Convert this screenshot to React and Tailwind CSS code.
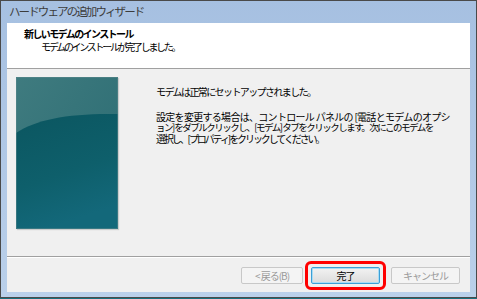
import React from "react";

const jp = { fontFamily: '"Noto Sans CJK JP", "Noto Sans", sans-serif' };

function Panel() {
  return (
    <svg width="102" height="152" viewBox="0 0 102 152" className="block">
      <defs>
        <linearGradient id="top" x1="0" y1="0" x2="1" y2="1">
          <stop offset="0" stopColor="#3f7b7f" />
          <stop offset="1" stopColor="#2a6b72" />
        </linearGradient>
        <linearGradient id="main" x1="0" y1="0" x2="0.3" y2="1">
          <stop offset="0" stopColor="#0b5660" />
          <stop offset="0.6" stopColor="#0e5f6b" />
          <stop offset="1" stopColor="#13687a" />
        </linearGradient>
      </defs>
      <rect x="0" y="0" width="102" height="152" fill="url(#top)" />
      <path d="M0 56 C 20 42, 55 36, 102 37 L102 152 L0 152 Z" fill="url(#main)" />
      <rect x="0.5" y="0.5" width="101" height="151" fill="none" stroke="#5d8a8e" strokeOpacity="0.5" />
    </svg>
  );
}

export default function App() {
  return (
    <div className="w-[477px] h-[299px] bg-[#18707e] overflow-hidden" style={jp}>
      <div className="w-[477px] h-[298px] flex flex-col border border-[#4a4a4a] bg-gradient-to-b from-[#a6c0e1] to-[#bad0ea]">
        <div className="h-[22px] flex items-center pl-[8px] text-[11.5px] tracking-[-1.9px] text-[#3c3c3c] leading-none whitespace-nowrap">
          ハードウェアの追加ウィザード
        </div>
        <div className="flex-1 flex flex-col mx-[6px] mb-[5px] bg-[#f0f0f0]">
          <div className="h-[46px] bg-white border-b border-[#a0a0a0] flex flex-col pt-[5px] pl-[17px] text-[10px] leading-[12px] text-black whitespace-nowrap">
            <div className="font-bold tracking-[-1.6px]">新しいモデムのインストール</div>
            <div className="pl-[17px] mt-[1px] tracking-[-2.3px]">モデムのインストールが完了しました。</div>
          </div>
          <div className="h-[188px] flex border-b border-[#a0a0a0] pt-[8px] pl-[9px]">
            <div className="shadow-[1px_1px_1px_rgba(0,0,0,0.15)] h-[152px]">
              <Panel />
            </div>
            <div className="pl-[38px] pt-[9px] text-[10px] leading-[11px] text-black whitespace-nowrap">
              <div className="tracking-[-1.6px]">モデムは正常にセットアップされました。</div>
              <div className="mt-[14px]">
                <div className="tracking-[-0.7px]">設定を変更する場合は、コントロール パネルの [電話とモデムのオプシ</div>
                <div className="text-[9.5px] tracking-[-1.5px]">ョン] をダブルクリックし、[モデム] タブをクリックします。次にこのモデムを</div>
                <div className="tracking-[-2.1px]">選択し、[プロパティ] をクリックしてください。</div>
              </div>
            </div>
          </div>
          <div className="flex-1 border-t border-white flex justify-end items-start pt-[9px] pr-[10px] text-[10px] tracking-[-1px] whitespace-nowrap">
            <div className="w-[62px] h-[17px] border border-[#c8c8c8] rounded-[2px] bg-[#f4f4f4] text-[#9a9a9a] flex items-center justify-center leading-none">
              &lt; 戻る(B)
            </div>
            <div className="relative ml-[8px]">
              <div className="w-[69px] h-[17px] border border-[#3c9fd6] rounded-[2px] bg-gradient-to-b from-[#f2f2f2] to-[#dcdcdc] text-black flex items-center justify-center leading-none shadow-[inset_0_0_0_1px_#a8dcf4]">
                完了
              </div>
              <div className="absolute left-[-6px] top-[-6px] w-[81px] h-[29px] border-[3px] border-[#ff0000] rounded-[6px]"></div>
            </div>
            <div className="ml-[11px] w-[69px] h-[17px] border border-[#c8c8c8] rounded-[2px] bg-[#f4f4f4] text-[#9a9a9a] flex items-center justify-center leading-none">
              キャンセル
            </div>
          </div>
        </div>
      </div>
    </div>
  );
}
